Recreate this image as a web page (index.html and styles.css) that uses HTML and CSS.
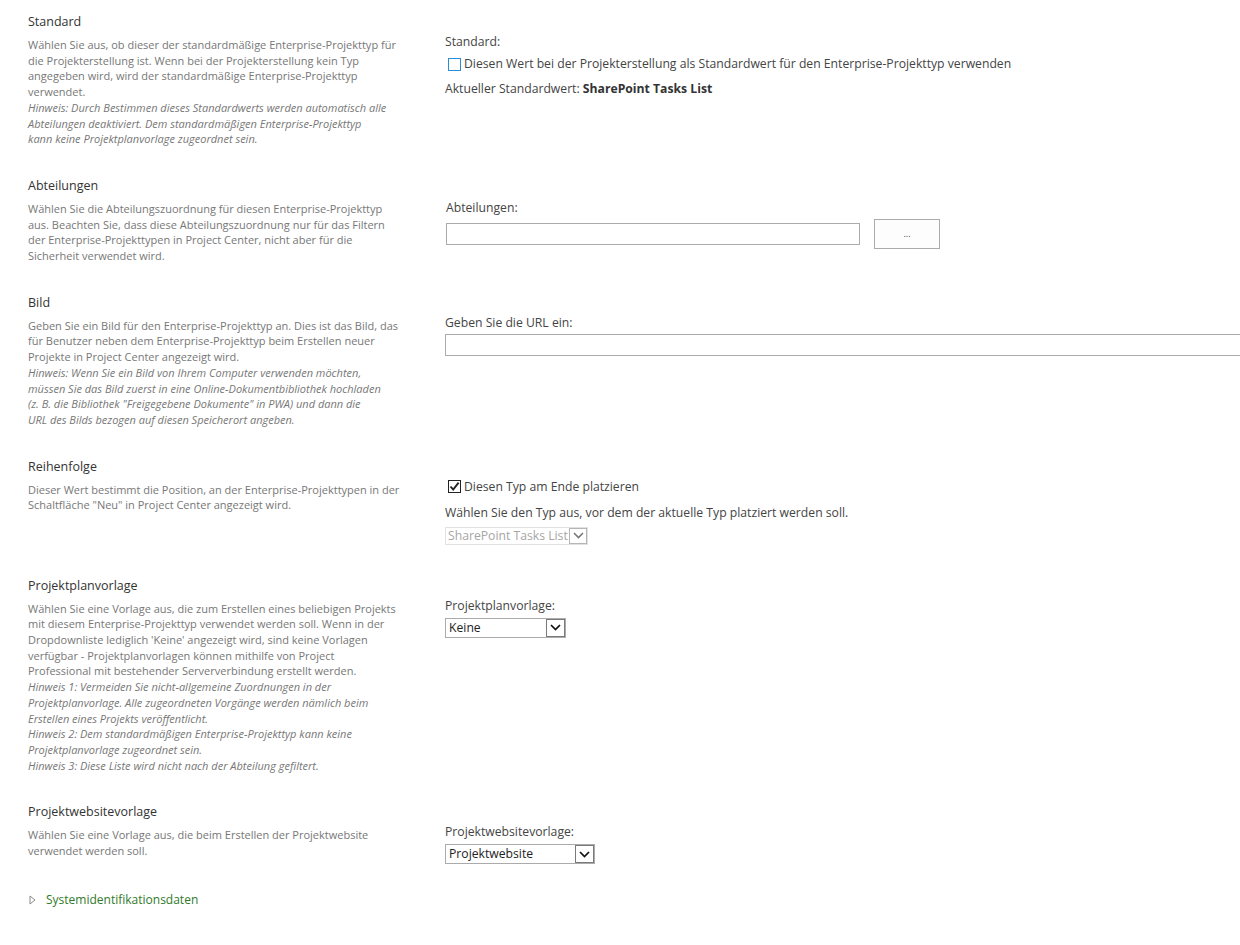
FILE: index.html
```html
<!DOCTYPE html>
<html lang="de">
<head>
    <meta charset="UTF-8">
    <meta name="viewport" content="width=device-width, initial-scale=1.0">
    <title>Enterprise-Projekttyp bearbeiten</title>
    <link rel="stylesheet" href="styles.css">
</head>
<body>
    <div class="form">

        <div class="section">
            <div class="desc-col">
                <h3 class="title">Standard</h3>
                <div class="desc">
                    Wählen Sie aus, ob dieser der standardmäßige Enterprise-Projekttyp für<br>
                    die Projekterstellung ist. Wenn bei der Projekterstellung kein Typ<br>
                    angegeben wird, wird der standardmäßige Enterprise-Projekttyp<br>
                    verwendet.<br>
                    <i>Hinweis: Durch Bestimmen dieses Standardwerts werden automatisch alle<br>
                    Abteilungen deaktiviert. Dem standardmäßigen Enterprise-Projekttyp<br>
                    kann keine Projektplanvorlage zugeordnet sein.</i>
                </div>
            </div>
            <div class="field-col">
                <div class="label">Standard:</div>
                <label class="check-row">
                    <span class="checkbox checkbox-focus"></span>
                    Diesen Wert bei der Projekterstellung als Standardwert für den Enterprise-Projekttyp verwenden
                </label>
                <div class="current">Aktueller Standardwert: <b>SharePoint Tasks List</b></div>
            </div>
        </div>

        <div class="section">
            <div class="desc-col">
                <h3 class="title">Abteilungen</h3>
                <div class="desc">
                    Wählen Sie die Abteilungszuordnung für diesen Enterprise-Projekttyp<br>
                    aus. Beachten Sie, dass diese Abteilungszuordnung nur für das Filtern<br>
                    der Enterprise-Projekttypen in Project Center, nicht aber für die<br>
                    Sicherheit verwendet wird.
                </div>
            </div>
            <div class="field-col">
                <div class="label label-dept">Abteilungen:</div>
                <div class="dept-row">
                    <input type="text" class="textbox textbox-dept">
                    <button type="button" class="dots-btn">...</button>
                </div>
            </div>
        </div>

        <div class="section">
            <div class="desc-col">
                <h3 class="title">Bild</h3>
                <div class="desc">
                    Geben Sie ein Bild für den Enterprise-Projekttyp an. Dies ist das Bild, das<br>
                    für Benutzer neben dem Enterprise-Projekttyp beim Erstellen neuer<br>
                    Projekte in Project Center angezeigt wird.<br>
                    <i>Hinweis: Wenn Sie ein Bild von Ihrem Computer verwenden möchten,<br>
                    müssen Sie das Bild zuerst in eine Online-Dokumentbibliothek hochladen<br>
                    (z. B. die Bibliothek "Freigegebene Dokumente" in PWA) und dann die<br>
                    URL des Bilds bezogen auf diesen Speicherort angeben.</i>
                </div>
            </div>
            <div class="field-col">
                <div class="label">Geben Sie die URL ein:</div>
                <input type="text" class="textbox textbox-url">
            </div>
        </div>

        <div class="section section-order">
            <div class="desc-col">
                <h3 class="title">Reihenfolge</h3>
                <div class="desc">
                    Dieser Wert bestimmt die Position, an der Enterprise-Projekttypen in der<br>
                    Schaltfläche "Neu" in Project Center angezeigt wird.
                </div>
            </div>
            <div class="field-col">
                <label class="check-row check-row-order">
                    <span class="checkbox checkbox-checked">
                        <svg width="11" height="11" viewBox="0 0 11 11"><path d="M1.5 5.5 L4.2 8.6 L9.6 1.6" fill="none" stroke="#222" stroke-width="1.9"/></svg>
                    </span>
                    Diesen Typ am Ende platzieren
                </label>
                <div class="label label-order">Wählen Sie den Typ aus, vor dem der aktuelle Typ platziert werden soll.</div>
                <div class="dropdown dropdown-disabled">
                    <span class="dropdown-value">SharePoint Tasks List</span>
                    <span class="dropdown-arrow">
                        <svg width="11" height="7" viewBox="0 0 11 7"><path d="M1 1 L5.5 5.5 L10 1" fill="none" stroke="#777" stroke-width="1.6"/></svg>
                    </span>
                </div>
            </div>
        </div>

        <div class="section">
            <div class="desc-col">
                <h3 class="title">Projektplanvorlage</h3>
                <div class="desc">
                    Wählen Sie eine Vorlage aus, die zum Erstellen eines beliebigen Projekts<br>
                    mit diesem Enterprise-Projekttyp verwendet werden soll. Wenn in der<br>
                    Dropdownliste lediglich 'Keine' angezeigt wird, sind keine Vorlagen<br>
                    verfügbar - Projektplanvorlagen können mithilfe von Project<br>
                    Professional mit bestehender Serververbindung erstellt werden.<br>
                    <i>Hinweis 1: Vermeiden Sie nicht-allgemeine Zuordnungen in der<br>
                    Projektplanvorlage. Alle zugeordneten Vorgänge werden nämlich beim<br>
                    Erstellen eines Projekts veröffentlicht.<br>
                    Hinweis 2: Dem standardmäßigen Enterprise-Projekttyp kann keine<br>
                    Projektplanvorlage zugeordnet sein.<br>
                    Hinweis 3: Diese Liste wird nicht nach der Abteilung gefiltert.</i>
                </div>
            </div>
            <div class="field-col">
                <div class="label">Projektplanvorlage:</div>
                <div class="dropdown dropdown-plan">
                    <span class="dropdown-value">Keine</span>
                    <span class="dropdown-arrow">
                        <svg width="11" height="7" viewBox="0 0 11 7"><path d="M1 1 L5.5 5.5 L10 1" fill="none" stroke="#111" stroke-width="1.7"/></svg>
                    </span>
                </div>
            </div>
        </div>

        <div class="section">
            <div class="desc-col">
                <h3 class="title">Projektwebsitevorlage</h3>
                <div class="desc">
                    Wählen Sie eine Vorlage aus, die beim Erstellen der Projektwebsite<br>
                    verwendet werden soll.
                </div>
            </div>
            <div class="field-col">
                <div class="label">Projektwebsitevorlage:</div>
                <div class="dropdown dropdown-site">
                    <span class="dropdown-value">Projektwebsite</span>
                    <span class="dropdown-arrow">
                        <svg width="11" height="7" viewBox="0 0 11 7"><path d="M1 1 L5.5 5.5 L10 1" fill="none" stroke="#111" stroke-width="1.7"/></svg>
                    </span>
                </div>
            </div>
        </div>

        <div class="sysinfo">
            <svg class="expander" width="7" height="10" viewBox="0 0 7 10"><path d="M1 1 L6 5 L1 9 Z" fill="#fff" stroke="#8a8a8a" stroke-width="1"/></svg>
            <a href="#" class="sysinfo-link">Systemidentifikationsdaten</a>
        </div>

    </div>
</body>
</html>
```

FILE: styles.css
```css
* {
    box-sizing: border-box;
    margin: 0;
    padding: 0;
}

body {
    font-family: 'Open Sans', 'Noto Sans', sans-serif;
    background: #fff;
    color: #444;
    overflow-x: hidden;
}

.form {
    padding: 14px 0 0 28px;
    width: 1240px;
}

.section {
    display: flex;
    margin-bottom: 31px;
}

.section-order {
    margin-bottom: 33px;
}

.desc-col {
    width: 380px;
    flex-shrink: 0;
    margin-right: 37px;
}

.title {
    font-size: 12.5px;
    font-weight: normal;
    color: #333;
    line-height: 16px;
    margin-bottom: 7px;
}

.desc {
    font-size: 11px;
    line-height: 15.7px;
    color: #777;
    white-space: nowrap;
}

.desc i {
    color: #777;
}

.field-col {
    padding-top: 20px;
    font-size: 12.2px;
    color: #444;
    flex: 1;
    min-width: 0;
}

.label {
    line-height: 16px;
}

.check-row {
    display: flex;
    align-items: center;
    margin-top: 6px;
    line-height: 16px;
    padding-left: 3px;
}

.checkbox {
    width: 13px;
    height: 13px;
    border: 1px solid #333;
    background: #fff;
    margin-right: 3px;
    display: flex;
    align-items: center;
    justify-content: center;
}

.checkbox-focus {
    border-color: #2a8dd4;
}

.current {
    margin-top: 9px;
    line-height: 16px;
}

.current b {
    font-weight: bold;
    color: #333;
}

.label-dept {
    margin-left: 1px;
    margin-top: 2px;
}

.dept-row {
    display: flex;
    align-items: center;
    margin-top: 3px;
}

.textbox {
    height: 22px;
    border: 1px solid #ababab;
    background: #fff;
    font-family: inherit;
    font-size: 12px;
    padding: 2px 4px;
    outline: none;
}

.textbox-dept {
    width: 414px;
    margin-left: 1px;
}

.dots-btn {
    width: 66px;
    height: 30px;
    margin-left: 14px;
    border: 1px solid #ababab;
    background: #fdfdfd;
    color: #444;
    font-family: inherit;
    font-size: 9px;
    cursor: pointer;
}

.textbox-url {
    display: block;
    width: 820px;
    margin-top: 3px;
}

.check-row-order {
    margin-top: 0;
}

.checkbox-checked {
    border-color: #222;
}

.label-order {
    margin-top: 10px;
}

.dropdown {
    display: flex;
    align-items: stretch;
    border: 1px solid #ababab;
    background: #fff;
    height: 20px;
    margin-top: 4px;
    color: #222;
}

.dropdown-value {
    flex: 1;
    padding-left: 3px;
    line-height: 18px;
    white-space: nowrap;
    overflow: hidden;
}

.dropdown-arrow {
    width: 19px;
    border: 1px solid #7a7a7a;
    margin: 0;
    display: flex;
    align-items: center;
    justify-content: center;
    background: #fff;
}

.dropdown-disabled {
    width: 143px;
    height: 18px;
    margin-top: 6px;
    border-color: #e1e1e1;
    color: #a6a6a6;
}

.dropdown-disabled .dropdown-value {
    line-height: 16px;
    padding-left: 2px;
}

.dropdown-disabled .dropdown-arrow {
    width: 18px;
    border-color: #b5b5b5;
}

.dropdown-plan {
    width: 121px;
}

.dropdown-site {
    width: 150px;
}

.sysinfo {
    display: flex;
    align-items: center;
    padding-left: 1px;
    margin-top: -4px;
    font-size: 12px;
}

.expander {
    margin-right: 10px;
}

.sysinfo-link {
    color: #2f7a2a;
    text-decoration: none;
}
```
